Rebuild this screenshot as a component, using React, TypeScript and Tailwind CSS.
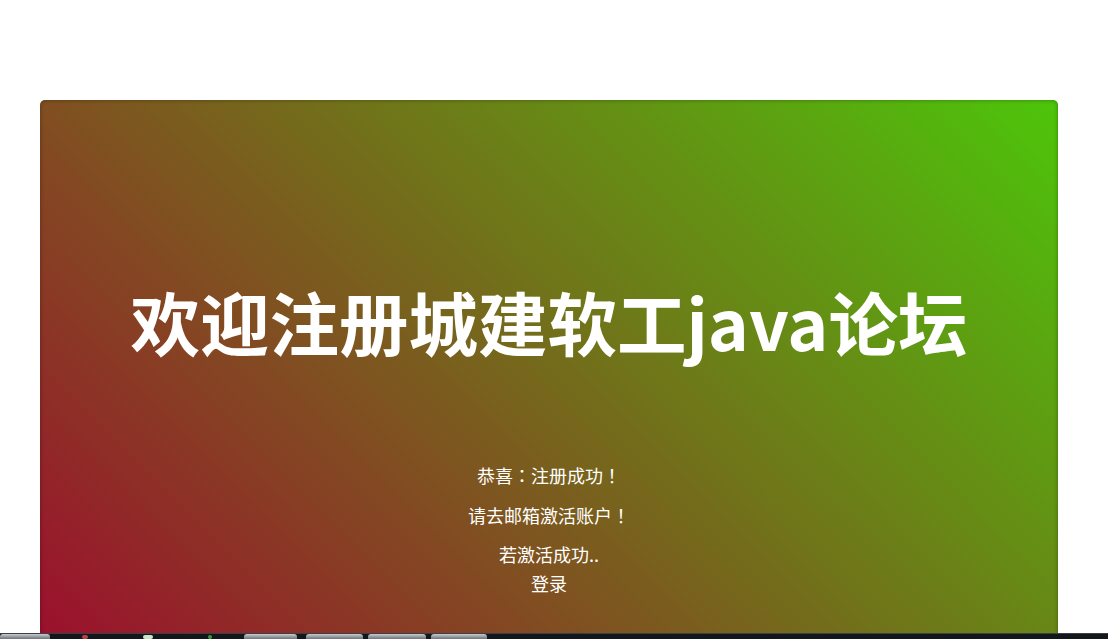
import React from 'react';

const cjk = { fontFamily: '"Microsoft YaHei", "Noto Sans CJK SC", "Noto Sans", sans-serif' };

function Punct({ children }: { children: React.ReactNode }) {
  return <span className="font-['Noto_Sans_CJK_TC',sans-serif]">{children}</span>;
}

function Taskbar() {
  const buttons = [
    { left: 0, width: 50 },
    { left: 244, width: 53 },
    { left: 306, width: 57 },
    { left: 368, width: 58 },
    { left: 431, width: 56 },
  ];
  return (
    <div className="fixed bottom-0 left-0 w-full h-[6px] bg-[#12171c] border-t border-[#3a4046]">
      {buttons.map((b, i) => (
        <div
          key={i}
          className="absolute top-0 h-full rounded-t-[3px] bg-gradient-to-b from-[#c9cdd1] to-[#6d7378]"
          style={{ left: b.left, width: b.width }}
        />
      ))}
      <div className="absolute top-[1px] left-[82px] w-[6px] h-[4px] rounded-full bg-[#b8414a]" />
      <div className="absolute top-[1px] left-[143px] w-[10px] h-[4px] rounded-full bg-[#c9e6c9]" />
      <div className="absolute top-[1px] left-[208px] w-[4px] h-[4px] rounded-full bg-[#3c9a3c]" />
    </div>
  );
}

export default function App() {
  return (
    <div className="min-h-[639px] bg-white pt-[100px]" style={cjk}>
      <div className="ml-[40px] w-[1018px] h-[624px] rounded-[5px] bg-[linear-gradient(45deg,#a0062f,#4dc50a)] shadow-[inset_0_0_4px_rgba(0,0,0,0.35)] pt-[182px] flex flex-col items-center text-white">
        {/* Title */}
        <h1 className="text-[69.5px] leading-[77px] font-bold">欢迎注册城建软工java论坛</h1>

        {/* Messages */}
        <p className="mt-[104px] text-[18px] leading-[24px]">
          恭喜<Punct>：</Punct>注册成功<Punct>！</Punct>
        </p>
        <p className="mt-[16px] text-[18px] leading-[24px]">
          请去邮箱激活账户<Punct>！</Punct>
        </p>
        <p className="mt-[15px] text-[18px] leading-[24px]">若激活成功..</p>
        <a href="#" className="mt-[5px] text-[18px] leading-[24px] text-white no-underline">
          登录
        </a>
      </div>
      <Taskbar />
    </div>
  );
}
